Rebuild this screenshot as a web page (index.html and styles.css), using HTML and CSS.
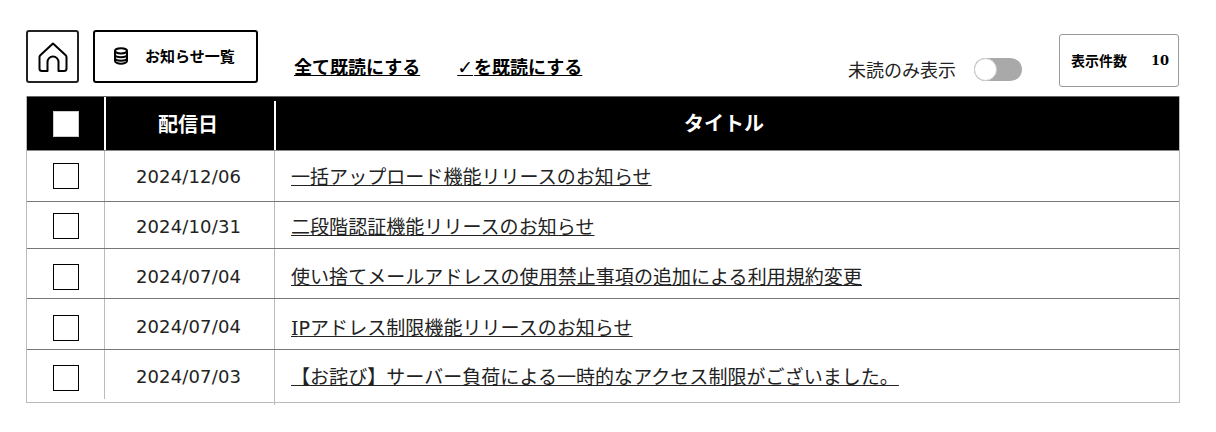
FILE: index.html
```html
<!DOCTYPE html>
<html lang="ja">
<head>
<meta charset="utf-8">
<title>お知らせ一覧</title>
<link rel="stylesheet" href="styles.css">
</head>
<body>
<main class="page">
  <div class="toolbar">
    <a class="home-btn" href="#" aria-label="ホーム">
      <svg width="32" height="32" viewBox="0 0 32 32" fill="none" stroke="#000" stroke-width="2" stroke-linejoin="round" stroke-linecap="round"><path d="M16 2.500 3.300 14.200a2.500 2.500 0 0 0-.8 1.800v11.500a2.500 2.500 0 0 0 2.500 2.500h5.500v-9a5.500 5.500 0 0 1 11 0v9H27a2.500 2.500 0 0 0 2.500-2.500V16a2.500 2.500 0 0 0-.8-1.800z"/></svg>
    </a>
    <a class="list-btn" href="#">
      <svg class="db" width="16" height="18" viewBox="0 0 16 18" fill="none" stroke="#000" stroke-width="2"><path d="M2 4v10c0 1.500 2.700 2.800 6 2.800s6-1.300 6-2.800V4"/><ellipse cx="8" cy="3.800" rx="6" ry="2.600"/><path d="M2 7.500c0 1.500 2.700 2.700 6 2.700s6-1.200 6-2.700M2 11c0 1.500 2.700 2.700 6 2.700s6-1.200 6-2.700"/></svg>
      <span>お知らせ一覧</span>
    </a>
    <a class="action first" href="#">全て既読にする</a>
    <a class="action second" href="#"><span class="check">✓</span>を既読にする</a>
    <div class="toggle-wrap">
      <span class="toggle-label">未読のみ表示</span>
      <span class="toggle"><span class="knob"></span></span>
    </div>
    <div class="count"><span>表示件数</span><b>10</b></div>
  </div>
  <div class="table">
    <div class="row head">
      <div class="cell c1"><span class="box"></span></div>
      <div class="cell c2">配信日</div>
      <div class="cell c3">タイトル</div>
    </div>
    <div class="row r1">
      <div class="cell c1"><span class="box"></span></div>
      <div class="cell c2">2024/12/06</div>
      <div class="cell c3"><a href="#">一括アップロード機能リリースのお知らせ</a></div>
    </div>
    <div class="row r2">
      <div class="cell c1"><span class="box"></span></div>
      <div class="cell c2">2024/10/31</div>
      <div class="cell c3"><a href="#">二段階認証機能リリースのお知らせ</a></div>
    </div>
    <div class="row r3">
      <div class="cell c1"><span class="box"></span></div>
      <div class="cell c2">2024/07/04</div>
      <div class="cell c3"><a href="#">使い捨てメールアドレスの使用禁止事項の追加による利用規約変更</a></div>
    </div>
    <div class="row r4">
      <div class="cell c1"><span class="box"></span></div>
      <div class="cell c2">2024/07/04</div>
      <div class="cell c3"><a href="#"><span class="serif-i">I</span>Pアドレス制限機能リリースのお知らせ</a></div>
    </div>
    <div class="row r5">
      <div class="cell c1"><span class="box"></span></div>
      <div class="cell c2">2024/07/03</div>
      <div class="cell c3"><a href="#">【お詫び】サーバー負荷による一時的なアクセス制限がございました。</a></div>
    </div>
  </div>
</main>
</body>
</html>
```
FILE: styles.css
```css
* { box-sizing: border-box; }
html, body { margin: 0; padding: 0; background: #fff; }
body {
  width: 1216px;
  height: 432px;
  overflow: hidden;
  color: #000;
  font-family: "DejaVu Sans", "Noto Sans CJK JP", sans-serif;
}
a { color: inherit; }
.page { padding: 29px 36px 0 26px; }
.toolbar { display: flex; height: 67px; align-items: flex-start; }
.home-btn {
  width: 53px; height: 53px; margin-top: 1px;
  border: 2px solid #222; border-radius: 3px;
  display: flex; align-items: center; justify-content: center;
}
.list-btn {
  width: 165px; height: 53px; margin-left: 14px; margin-top: 1px;
  border: 2px solid #000; border-radius: 3px;
  display: flex; align-items: center; padding: 0 0 2px 18px;
  text-decoration: none; font-size: 15px; font-weight: 700;
  font-family: "Noto Sans CJK JP", sans-serif;
}
.list-btn span { margin-left: 16px; }
.action {
  font-family: "Noto Sans CJK JP", sans-serif;
  font-size: 18px; font-weight: 700; line-height: 26px; margin-top: 24px;
}
.first { margin-left: 36px; }
.second { margin-left: 37px; }
.check { font-family: "DejaVu Sans", sans-serif; font-weight: 400; font-size: 19px; line-height: 1; padding-right: 1px; }
.toggle-wrap { margin-left: auto; display: flex; align-items: center; margin-top: 25px; height: 30px; }
.toggle-label { font-family: "Noto Sans CJK JP", sans-serif; font-size: 18px; color: #222; font-weight: 400; }
.toggle { width: 48px; height: 23px; margin-left: 18px; background: #a9a9a9; border-radius: 12px; position: relative; display: block; }
.knob { position: absolute; left: 0; top: 0; width: 23px; height: 23px; border-radius: 50%; background: #fff; border: 1px solid #ccc; }
.count {
  width: 120px; height: 53px; margin-left: 37px; margin-right: 1px; margin-top: 5px;
  border: 1px solid #999; border-radius: 3px;
  display: flex; align-items: center; justify-content: space-between; padding: 0 9px 2px 11px;
  font-size: 14px; font-weight: 700; font-family: "Noto Sans CJK JP", sans-serif;
}
.count b { font-family: "DejaVu Serif", serif; font-size: 13px; padding-top: 1px; }
.table { width: 1154px; border-right: 1px solid #bbb; border-left: 1px solid #bbb; border-bottom: 1px solid #bbb; }
.row { display: grid; grid-template-columns: 78px 170px 1fr; border-bottom: 1px solid #777; }
.row:last-child { border-bottom: 0; }
.head { height: 55px; background: #000; color: #fff; font-family: "Noto Sans CJK JP", sans-serif; font-weight: 700; font-size: 20px; border-top: 1px solid #666; border-bottom: 1px solid #888; grid-template-columns: 79px 170px 1fr; }
.r1 { height: 51px; } .r2 { height: 47px; } .r3 { height: 50px; } .r4 { height: 51px; } .r5 { height: 52px; }
.cell { display: flex; align-items: center; justify-content: center; border-right: 1px solid #bbb; position: relative; }
.r2 .cell { padding-top: 2px; }
.r5 .cell { padding-top: 3px; }
.r3 .cell { padding-top: 6px; }
.r4 .cell { padding-top: 7px; }
.head .cell { border-right: 2px solid #fff; }
.head .c2 { border-right: 0; padding-right: 6px; }
.head .c2::after { content: ""; position: absolute; right: 0; top: 4px; bottom: 0; width: 2px; background: #fff; }
.head .c3, .row .c3 { border-right: 0; }
.c1 { padding-left: 1px; }
.c2 { font-size: 18px; letter-spacing: 0.15px; padding-right: 2px; color: #222; }
.r4 .c2, .r5 .c2 { padding-bottom: 2px; }
.head .c2 { color: #fff; font-size: 20px; letter-spacing: 0; padding-bottom: 1px; }
.head .c3 { padding-right: 7px; padding-bottom: 2px; }
.row:not(.head) .c3 { justify-content: flex-start; padding-left: 16px; padding-bottom: 2px; font-family: "DejaVu Sans", "Noto Sans CJK JP", sans-serif; font-size: 19px; letter-spacing: 0.05px; color: #222; }
.row.r5 .c3 { padding-bottom: 4px; }
.serif-i { font-family: "DejaVu Serif", serif; }
.box { width: 26px; height: 26px; border: 1px solid #000; background: #fff; display: block; }
.head .box { border-color: #ccc; }
.r5 .c1::after { content: ""; position: absolute; right: -1px; bottom: 0; width: 1px; height: 3px; background: #fff; }
.r5 .c2::after { content: ""; position: absolute; right: -1px; bottom: -3px; width: 1px; height: 3px; background: #bbb; }
```
